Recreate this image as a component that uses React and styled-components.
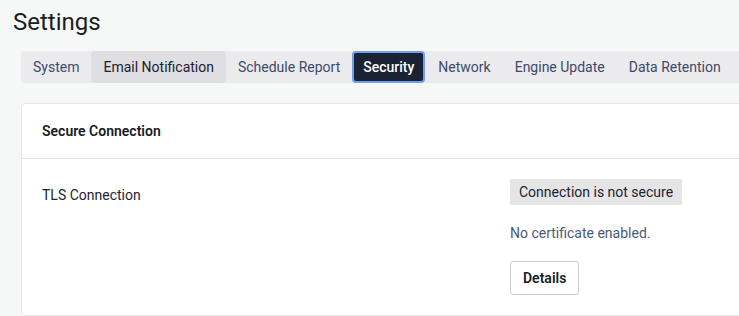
import React from 'react';
import styled, { createGlobalStyle } from 'styled-components';

const GlobalStyle = createGlobalStyle`
  html, body {
    margin: 0;
    padding: 0;
    background: #f6f7f7;
    overflow: hidden;
  }
  body {
    font-family: Roboto, "Liberation Sans", Arial, sans-serif;
    color: #1c2130;
  }
`;

const Page = styled.div`
  width: 1020px;
  padding: 6px 0 0 0;
`;

const Title = styled.h1`
  margin: 0 0 13px 13px;
  font-size: 24px;
  font-weight: 400;
  line-height: 32px;
  color: #1a1d24;
`;

const Content = styled.div`
  padding: 0 0 0 21px;
`;

const TabBar = styled.nav`
  display: flex;
  height: 32px;
  background: #ebebed;
  border-radius: 3px;
  margin-bottom: 20px;
`;

const Tab = styled.button`
  display: flex;
  align-items: center;
  height: 32px;
  box-sizing: border-box;
  border: ${(p) => (p.active ? '2px solid #6f9ef0' : 'none')};
  border-radius: 4px;
  background: ${(p) =>
    p.active ? '#1b2233' : p.hover ? '#dfdfe3' : 'transparent'};
  color: ${(p) => (p.active ? '#ffffff' : p.hover ? '#1b2130' : '#3d4a6a')};
  font-family: inherit;
  font-size: 14px;
  font-weight: ${(p) => (p.active ? 500 : 400)};
  white-space: nowrap;
  cursor: pointer;
  padding: ${(p) => (p.active ? '0 9px' : '0 12px')};
  margin-right: ${(p) => (p.active ? '1px' : '0')};
`;

const Card = styled.section`
  background: #ffffff;
  border: 1px solid #e6e7e8;
  border-radius: 4px;
`;

const CardHeader = styled.header`
  height: 54px;
  display: flex;
  align-items: center;
  padding: 0 20px;
  border-bottom: 1px solid #e6e7e8;
  font-size: 14px;
  font-weight: 600;
  color: #171b24;
`;

const CardBody = styled.div`
  display: grid;
  grid-template-columns: 468px 1fr;
  padding: 20px;
`;

const Label = styled.div`
  padding-top: 3px;
  font-size: 14px;
  line-height: 26px;
  color: #1f2430;
`;

const Stack = styled.div`
  display: flex;
  flex-direction: column;
  align-items: flex-start;
`;

const Badge = styled.span`
  display: inline-block;
  height: 26px;
  line-height: 26px;
  padding: 0 9px;
  background: #e5e5e6;
  border-radius: 2px;
  font-size: 14px;
  color: #1c2130;
`;

const Hint = styled.p`
  margin: 18px 0 18px;
  font-size: 14px;
  line-height: 20px;
  color: #4b5a78;
`;

const Button = styled.button`
  height: 34px;
  padding: 0 12px;
  background: #ffffff;
  border: 1px solid #c9cdd5;
  border-radius: 3px;
  font-family: inherit;
  font-size: 14px;
  font-weight: 600;
  color: #171b24;
  cursor: pointer;
`;

const tabs = [
  'System',
  'Email Notification',
  'Schedule Report',
  'Security',
  'Network',
  'Engine Update',
  'Data Retention',
];

export default function App() {
  return (
    <>
      <GlobalStyle />
      <Page>
        <Title>Settings</Title>
        <Content>
          <TabBar>
            {tabs.map((t) => (
              <Tab
                key={t}
                active={t === 'Security' || undefined}
                hover={t === 'Email Notification' || undefined}
              >
                {t}
              </Tab>
            ))}
          </TabBar>
          <Card>
            <CardHeader>Secure Connection</CardHeader>
            <CardBody>
              <Label>TLS Connection</Label>
              <Stack>
                <Badge>Connection is not secure</Badge>
                <Hint>No certificate enabled.</Hint>
                <Button>Details</Button>
              </Stack>
            </CardBody>
          </Card>
        </Content>
      </Page>
    </>
  );
}
